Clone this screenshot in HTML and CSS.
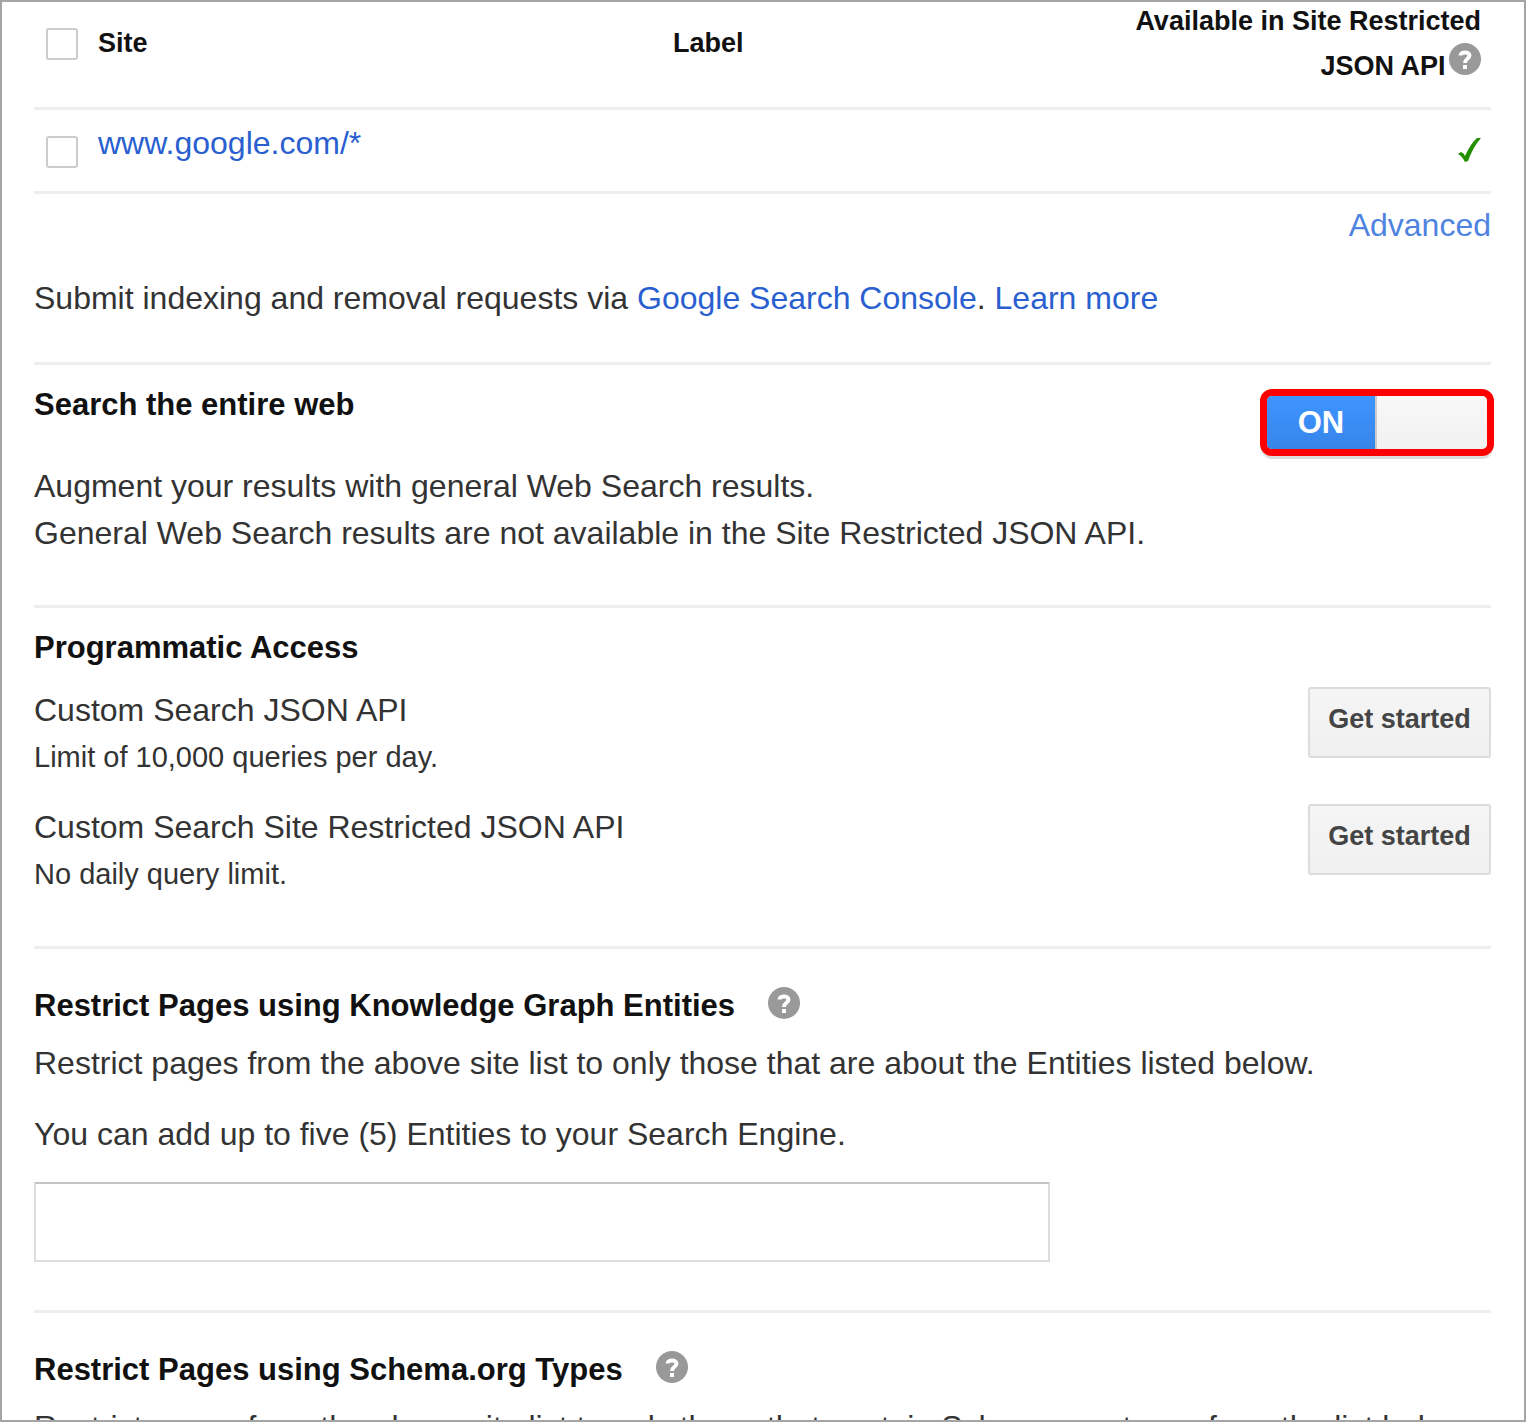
FILE: index.html
```html
<!DOCTYPE html>
<html lang="en">
<head>
<meta charset="utf-8">
<title>Custom Search setup</title>
<link rel="stylesheet" href="styles.css">
</head>
<body>
<main class="panel">
  <table class="sites">
    <thead>
      <tr>
        <th class="col-check"><input class="check" type="checkbox" aria-label="Select all sites"></th>
        <th class="col-site">Site</th>
        <th class="col-label">Label</th>
        <th class="col-api">Available in Site Restricted JSON API <button class="help help-inline" type="button" aria-label="Help"><svg viewBox="0 0 32 32"><circle cx="16" cy="16" r="16"/><path d="M11.500 12.500C11.500 8.500 20.500 8.500 20.500 12.500C20.500 16 16 15.500 16 20M16 22V26"/></svg></button></th>
      </tr>
    </thead>
    <tbody>
      <tr>
        <td class="col-check"><input class="check" type="checkbox" aria-label="Select www.google.com"></td>
        <td class="col-site"><a href="#site">www.google.com/*</a></td>
        <td class="col-label"></td>
        <td class="col-api"><svg class="tick" viewBox="0 0 24 26" role="img" aria-label="Available"><path d="M1 17L4 15Q7 16 8 19Q14 6 20 1H24Q16 10 11 24L8 25Q5 19 1 17Z"/></svg></td>
      </tr>
    </tbody>
  </table>
  <div class="advanced"><a href="#advanced">Advanced</a></div>
  <p class="submit">Submit indexing and removal requests via <a href="#console">Google Search Console</a>. <a href="#learn">Learn more</a></p>

  <section class="section web">
    <div class="web-head">
      <h2>Search the entire web</h2>
      <button class="switch" type="button" role="switch" aria-checked="true" aria-label="Search the entire web"><span class="switch-on">ON</span><span class="switch-off"></span></button>
    </div>
    <p>Augment your results with general Web Search results.<br>General Web Search results are not available in the Site Restricted JSON API.</p>
  </section>

  <section class="section access">
    <h2>Programmatic Access</h2>
    <div class="api">
      <div><p>Custom Search JSON API</p><p class="note">Limit of 10,000 queries per day.</p></div>
      <button class="start" type="button">Get started</button>
    </div>
    <div class="api">
      <div><p>Custom Search Site Restricted JSON API</p><p class="note">No daily query limit.</p></div>
      <button class="start" type="button">Get started</button>
    </div>
  </section>

  <section class="section restrict">
    <div class="title"><h2>Restrict Pages using Knowledge Graph Entities</h2><button class="help" type="button" aria-label="Help"><svg viewBox="0 0 32 32"><circle cx="16" cy="16" r="16"/><path d="M11.500 12.500C11.500 8.500 20.500 8.500 20.500 12.500C20.500 16 16 15.500 16 20M16 22V26"/></svg></button></div>
    <p>Restrict pages from the above site list to only those that are about the Entities listed below.</p>
    <label class="entities-label" for="entities">You can add up to five (5) Entities to your Search Engine.</label>
    <input class="entities" id="entities" type="text">
  </section>

  <section class="section restrict">
    <div class="title"><h2>Restrict Pages using Schema.org Types</h2><button class="help" type="button" aria-label="Help"><svg viewBox="0 0 32 32"><circle cx="16" cy="16" r="16"/><path d="M11.500 12.500C11.500 8.500 20.500 8.500 20.500 12.500C20.500 16 16 15.500 16 20M16 22V26"/></svg></button></div>
    <p>Restrict pages from the above site list to only those that contain Schema.org types from the list below.</p>
  </section>
</main>
</body>
</html>
```
FILE: styles.css
```css
* { box-sizing: border-box; }
body {
  margin: 0;
  background: #fff;
  color: #333;
  font: 32px/47px "Liberation Sans", Arial, sans-serif;
}
h2, p { margin: 0; }
h2 { color: #111; font-size: 31px; line-height: 47px; }
a { color: #2a5fd0; text-decoration: none; }
button { margin: 0; padding: 0; border: 0; font-family: inherit; }
.panel {
  height: 100vh;
  overflow: hidden;
  padding: 0 33px 0 32px;
  border: 2px solid #a5a5a5;
}
.sites { width: 100%; margin-top: -3px; table-layout: fixed; border-collapse: collapse; }
.sites th, .sites td { padding: 0; text-align: left; vertical-align: top; border-bottom: 3px solid #eee; }
.sites th { height: 109px; color: #111; font-size: 27px; line-height: 44px; }
.sites td { height: 84px; }
.sites .col-check { width: 64px; padding: 26px 0 0 12px; line-height: 0; }
.sites th.col-check { padding-top: 29px; }
.sites th.col-site, .sites th.col-label { padding-top: 22px; }
.sites td.col-site { padding-top: 10px; }
.col-label { width: 448px; }
.sites .col-api { width: 370px; padding-right: 10px; text-align: right; }
.check {
  appearance: none;
  width: 32px;
  height: 32px;
  margin: 0;
  border: 2px solid #ccc;
  border-radius: 3px;
  background: #fff;
}
.tick { width: 24px; height: 26px; margin-top: 27px; fill: #219000; }
.help { flex: none; width: 32px; height: 32px; background: none; line-height: 0; }
.help svg { width: 32px; height: 32px; fill: #999; }
.help path { fill: none; stroke: #fff; stroke-width: 4; }
.help-inline { margin-left: -4px; }
.advanced { text-align: right; padding-top: 8px; }
.advanced a { color: #4f83e0; }
.submit { margin-top: 26px; }
.section { border-top: 3px solid #eee; }
.web { margin-top: 40px; height: 243px; padding-top: 16px; }
.web-head { display: flex; justify-content: space-between; height: 82px; }
.switch {
  display: flex;
  width: 234px;
  height: 67px;
  margin: 8px -3px 0 0;
  border: 7px solid #f00;
  border-radius: 12px;
  overflow: hidden;
  box-shadow: 0 4px 0 -1px #ddd;
}
.switch-on {
  width: 108px;
  height: 100%;
  background: linear-gradient(#3e94ff, #3785ea);
  color: #fff;
  font: bold 31px/53px "Liberation Sans", Arial, sans-serif;
}
.switch-off { flex: 1; height: 100%; border-left: 2px solid #ccc; background: linear-gradient(#f8f8f8, #f1f1f1); }
.access { height: 341px; padding-top: 16px; }
.api { display: flex; justify-content: space-between; height: 117px; padding-top: 16px; }
.note { font-size: 29px; }
.start {
  width: 183px;
  height: 71px;
  padding-bottom: 6px;
  border: 2px solid #dcdcdc;
  border-radius: 3px;
  background: linear-gradient(#f5f5f5, #f0f0f0);
  color: #444;
  font-size: 27px;
  font-weight: bold;
}
.restrict { padding-top: 33px; }
.title { display: flex; gap: 33px; padding-bottom: 11px; }
.title .help { margin-top: 5px; }
.entities-label { display: block; margin-top: 24px; }
.entities {
  display: block;
  width: 1016px;
  max-width: 100%;
  height: 80px;
  margin: 24px 0 48px;
  border: 2px solid #ddd;
  border-top-color: #c4c4c4;
  font: inherit;
}
```
